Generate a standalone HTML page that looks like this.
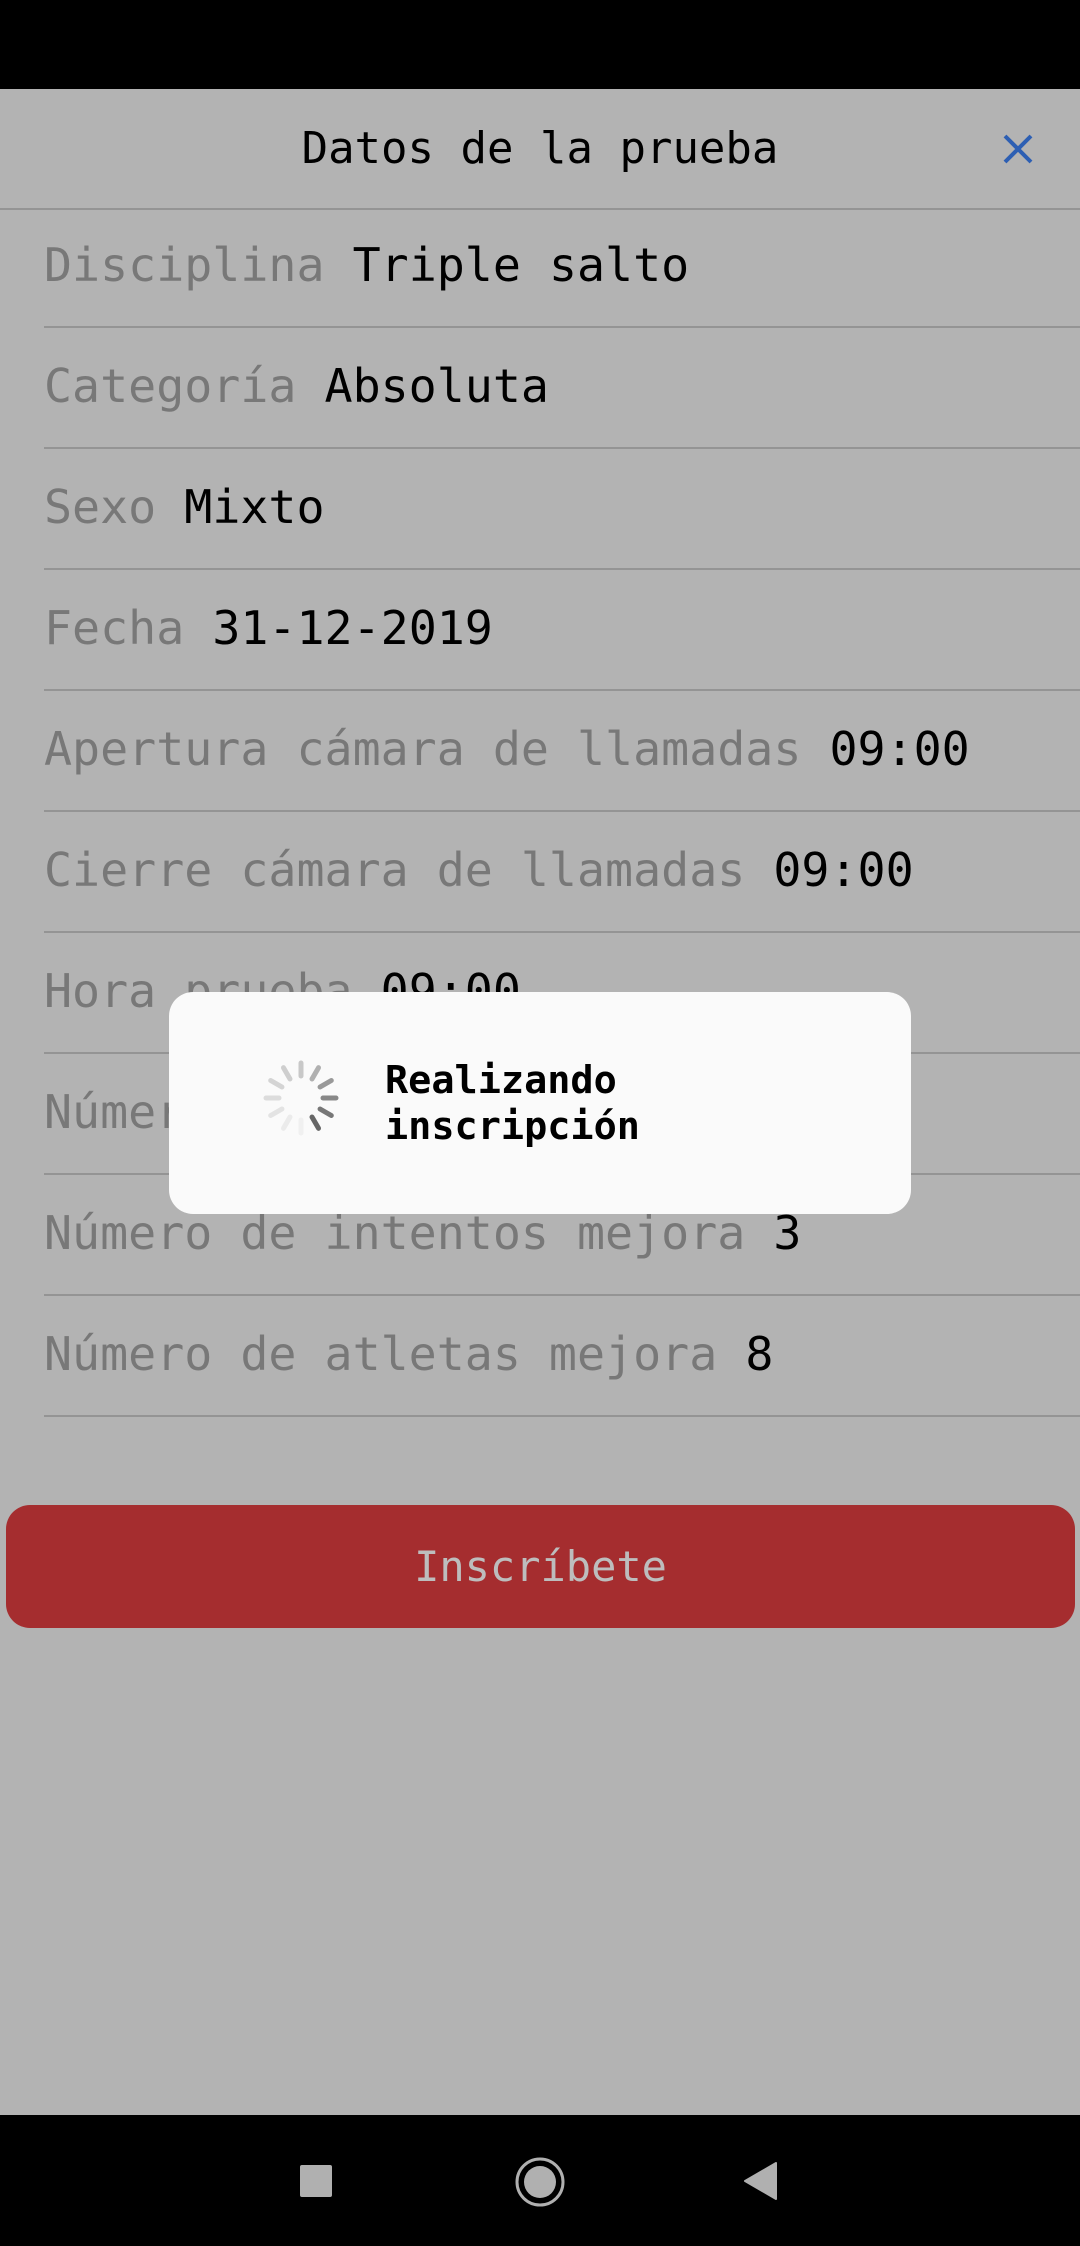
<!DOCTYPE html>
<html><head><meta charset="utf-8"><style>
*{margin:0;padding:0;box-sizing:border-box}
body{width:1080px;height:2246px;background:#b3b3b3;position:relative;overflow:hidden;font-family:"DejaVu Sans Mono","Liberation Mono",monospace}
.sb{position:absolute;left:0;top:0;width:1080px;height:89px;background:#000}
.title{position:absolute;top:119px;left:0;width:1080px;text-align:center;font-size:44px;color:#000;line-height:60px}
.x{position:absolute;left:1000px;top:131px}
.hl{position:absolute;left:0;top:208px;width:1080px;height:2px;background:#949494}
.row{position:absolute;left:44px;font-size:46.6px;line-height:60px;white-space:nowrap}
.row .l{color:#787878}.row .v{color:#000}
.ln{position:absolute;left:44px;width:1036px;height:2px;background:#949494}
.btn{position:absolute;left:6px;top:1505px;width:1069px;height:123px;background:#a52d2f;border-radius:24px;color:#bdbdbd;font-size:42px;text-align:center;line-height:123px}
.dlg{position:absolute;left:169px;top:992px;width:742px;height:222px;background:#fafafa;border-radius:24px}
.dt{position:absolute;left:216px;top:66px;font-size:38.5px;font-weight:bold;line-height:46px;color:#000}
.nav{position:absolute;left:0;top:2115px;width:1080px;height:131px;background:#000}
</style></head><body>
<div class="sb"></div>
<div class="title">Datos de la prueba</div>
<svg class="x" width="36" height="36" viewBox="0 0 36 36"><path d="M5 5L31 31M31 5L5 31" stroke="#2d5fb3" stroke-width="4"/></svg>
<div class="hl"></div>
<div class="row" style="top:235px"><span class="l">Disciplina</span> <span class="v">Triple salto</span></div>
<div class="ln" style="top:326px"></div>
<div class="row" style="top:356px"><span class="l">Categoría</span> <span class="v">Absoluta</span></div>
<div class="ln" style="top:447px"></div>
<div class="row" style="top:477px"><span class="l">Sexo</span> <span class="v">Mixto</span></div>
<div class="ln" style="top:568px"></div>
<div class="row" style="top:598px"><span class="l">Fecha</span> <span class="v">31-12-2019</span></div>
<div class="ln" style="top:689px"></div>
<div class="row" style="top:719px"><span class="l">Apertura cámara de llamadas</span> <span class="v">09:00</span></div>
<div class="ln" style="top:810px"></div>
<div class="row" style="top:840px"><span class="l">Cierre cámara de llamadas</span> <span class="v">09:00</span></div>
<div class="ln" style="top:931px"></div>
<div class="row" style="top:961px"><span class="l">Hora prueba</span> <span class="v">09:00</span></div>
<div class="ln" style="top:1052px"></div>
<div class="row" style="top:1082px"><span class="l">Número de intentos</span> <span class="v">3</span></div>
<div class="ln" style="top:1173px"></div>
<div class="row" style="top:1203px"><span class="l">Número de intentos mejora</span> <span class="v">3</span></div>
<div class="ln" style="top:1294px"></div>
<div class="row" style="top:1324px"><span class="l">Número de atletas mejora</span> <span class="v">8</span></div>
<div class="ln" style="top:1415px"></div>
<div class="btn">Inscríbete</div>
<div class="dlg">
<svg style="position:absolute;left:92px;top:66px" width="80" height="80" viewBox="-40 -40 80 80">
<g stroke-width="5" stroke-linecap="round">
<line x1="0" y1="-35" x2="0" y2="-22" stroke="#c8c8c8" transform="rotate(0)"/>
<line x1="0" y1="-35" x2="0" y2="-22" stroke="#b0b0b0" transform="rotate(30)"/>
<line x1="0" y1="-35" x2="0" y2="-22" stroke="#999" transform="rotate(60)"/>
<line x1="0" y1="-35" x2="0" y2="-22" stroke="#888" transform="rotate(90)"/>
<line x1="0" y1="-35" x2="0" y2="-22" stroke="#777" transform="rotate(120)"/>
<line x1="0" y1="-35" x2="0" y2="-22" stroke="#666" transform="rotate(150)"/>
<line x1="0" y1="-35" x2="0" y2="-22" stroke="#f0f0f0" transform="rotate(180)"/>
<line x1="0" y1="-35" x2="0" y2="-22" stroke="#ebebeb" transform="rotate(210)"/>
<line x1="0" y1="-35" x2="0" y2="-22" stroke="#e3e3e3" transform="rotate(240)"/>
<line x1="0" y1="-35" x2="0" y2="-22" stroke="#dcdcdc" transform="rotate(270)"/>
<line x1="0" y1="-35" x2="0" y2="-22" stroke="#d4d4d4" transform="rotate(300)"/>
<line x1="0" y1="-35" x2="0" y2="-22" stroke="#cecece" transform="rotate(330)"/>
</g></svg>
<div class="dt">Realizando<br>inscripción</div>
</div>
<div class="nav">
<svg width="1080" height="131" viewBox="0 2115 1080 131" style="position:absolute;left:0;top:0">
<rect x="300" y="2165" width="32" height="32" rx="2" fill="#b0b0b0"/>
<circle cx="540" cy="2182" r="23" fill="none" stroke="#b0b0b0" stroke-width="3"/>
<circle cx="540" cy="2182" r="16" fill="#b0b0b0"/>
<path d="M776 2163L776 2199L745 2181Z" fill="#b0b0b0" stroke="#b0b0b0" stroke-linejoin="round" stroke-width="2"/>
</svg>
</div>
</body></html>
